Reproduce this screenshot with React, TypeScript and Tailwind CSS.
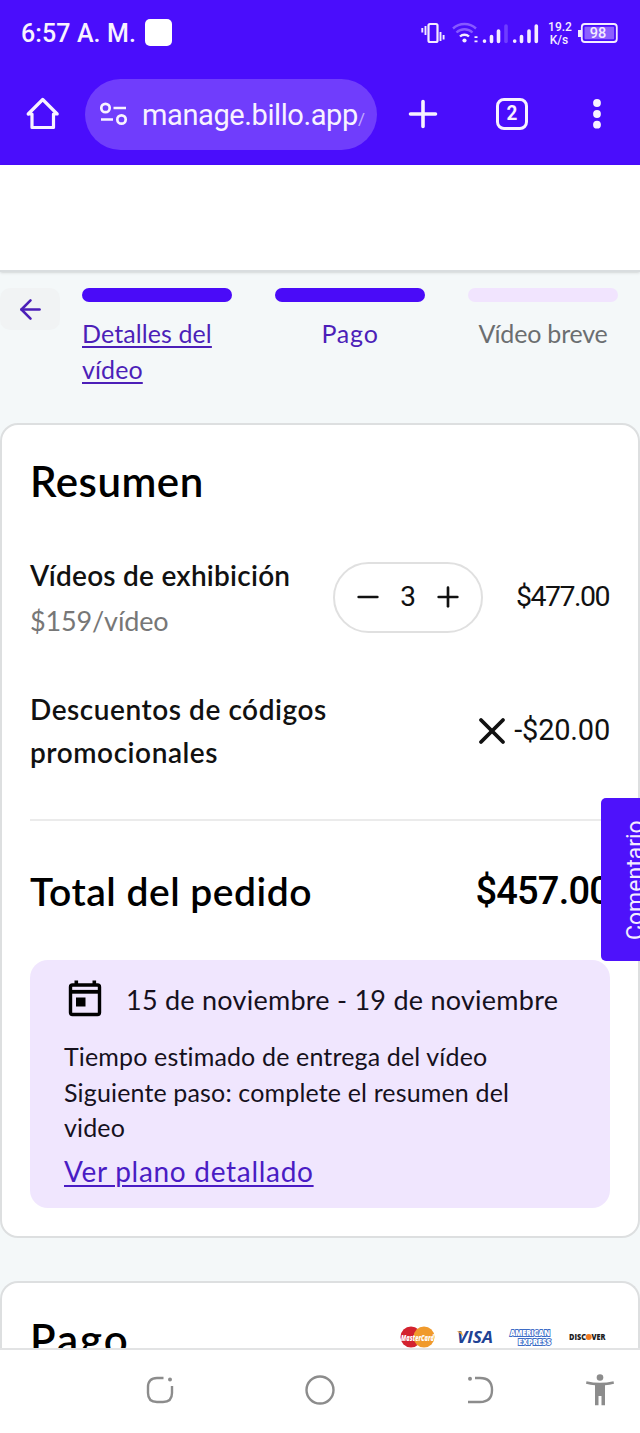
import { ArrowLeft, Minus, Plus, X } from "lucide-react";

const steps = [
  {
    label: "Detalles del vídeo",
    bar: "bg-[#4a0bf8]",
    text: "text-[#4c1fb8] tracking-[0.1px] underline underline-offset-[3px] decoration-2",
  },
  { label: "Pago", bar: "bg-[#4a0bf8]", text: "text-[#4c1fb8] tracking-[0.8px] text-center" },
  { label: "Vídeo breve", bar: "bg-[#f1e4fe]", text: "text-[#6b6e70] tracking-[-0.2px] text-center whitespace-nowrap" },
];

function StatusIcons() {
  return (
    <svg width="200" height="32" viewBox="0 0 200 32" fill="none" stroke="#f4ecff">
      {/* vibrate */}
      <rect x="8.5" y="7" width="9" height="18" rx="1.5" strokeWidth="2.2" />
      <path d="M5.5 9v9M2.3 11v4.5M20.5 15v9M23.6 18v4.5" strokeWidth="1.9" />
      {/* wifi */}
      <g strokeWidth="2.4">
        <path d="M33 11.5a17 17 0 0 1 23 0M36.5 15.5a11.5 11.5 0 0 1 16 0" stroke="#8759ff" />
        <path d="M40 19.5a6.5 6.5 0 0 1 9 0" />
      </g>
      <circle cx="44.5" cy="23.5" r="2.1" fill="#f4ecff" stroke="none" />
      <path d="M54.5 20.2h3M54.5 24.4h3" strokeWidth="1.8" />
      {/* signal */}
      <g strokeWidth="3.6" strokeLinecap="round">
        <path d="M64.5 24v.2M71.5 19.5v5M78.5 14v10.5" />
        <path d="M86 9v15.5" stroke="#6f3dff" />
        <path d="M94.7 24v.2M101.5 19.5v5M109 14v10.5M116.3 9v15.5" />
      </g>
      <g fontSize="12" fontFamily="Roboto" fontWeight="500" fill="#f4ecff" stroke="none" textAnchor="middle">
        <text x="140" y="13.5">19.2</text>
        <text x="139" y="26.5">K/s</text>
      </g>
      {/* battery */}
      <path d="M159.5 13v7" strokeWidth="3" />
      <rect x="161.8" y="7" width="35" height="18" rx="3" strokeWidth="1.8" />
      <rect x="164.5" y="9.7" width="29.6" height="12.6" rx="1" fill="#8c5fff" stroke="none" />
      <text x="178" y="21.3" textAnchor="middle" fontSize="14.5" fontFamily="Roboto" fontWeight="500" fill="#f4ecff" stroke="none">
        98
      </text>
    </svg>
  );
}

function BrowserHeader() {
  return (
    <header className="h-[165px] bg-[#4a0dfc] font-[Roboto,sans-serif] text-[#f8f2ff]">
      <div className="flex h-[66px] items-center pl-[21px] pr-[20px]">
        <span className="w-[124px] whitespace-nowrap pt-[2px] text-[25px] font-medium tracking-[0.1px]">6:57 A. M.</span>
        <span className="mb-[2px] size-[27px] rounded-[5px] bg-white" />
        <span className="ml-auto">
          <StatusIcons />
        </span>
      </div>
      <div className="flex h-[96px] items-center pl-[25px]">
        <svg width="36" height="36" viewBox="0 0 36 36" fill="none" stroke="currentColor" strokeWidth="3.2" strokeLinejoin="round" strokeLinecap="round">
          <path d="M7 18v13.5h21.5V18M3.2 18 17.7 3.5 32.2 18H29M3.2 18H7" />
        </svg>
        <div className="ml-[24px] flex h-[71px] w-[292px] items-center rounded-full bg-[#703dfc] pl-[15px]">
          <svg width="28" height="26" viewBox="0 0 28 26" fill="none" stroke="currentColor" strokeWidth="2.7">
            <circle cx="5.5" cy="7" r="4.2" />
            <circle cx="21.5" cy="18.5" r="4.2" />
            <path d="M13.5 7H26M1 18.5h12" />
          </svg>
          <span className="ml-[14px] flex items-baseline whitespace-nowrap pt-[3px] text-[29px] tracking-[-0.4px]">
            manage.billo.app
            <span className="text-[17px] opacity-60">/</span>
          </span>
        </div>
        <svg className="ml-[31px]" width="30" height="30" viewBox="0 0 30 30" stroke="currentColor" strokeWidth="3.6" strokeLinecap="round">
          <path d="M15 2.5v25M2.5 15h25" />
        </svg>
        <div className="ml-[58px] flex size-[32px] items-center justify-center rounded-[8px] border-[3px] border-current text-[21px] font-bold">
          <span className="scale-x-90">2</span>
        </div>
        <svg className="ml-[64px]" width="10" height="32" viewBox="0 0 10 32" fill="currentColor">
          <circle cx="5" cy="5" r="3.9" />
          <circle cx="5" cy="16" r="3.9" />
          <circle cx="5" cy="26.7" r="3.9" />
        </svg>
      </div>
    </header>
  );
}

function Stepper() {
  return (
    <div className="flex h-[151px] items-start pt-[16px]">
      <button className="flex h-[42px] w-[60px] items-center justify-center rounded-[10px] bg-[#f1f3f4] text-[#4c1fb8]">
        <ArrowLeft size={31} strokeWidth={2} />
      </button>
      <div className="ml-[22px] flex gap-[43px]">
        {steps.map((step) => (
          <div key={step.label} className="w-[150px]">
            <div className={`h-[14px] rounded-full ${step.bar}`} />
            <p className={`mt-[13px] text-[25px] leading-[36px] ${step.text}`}>{step.label}</p>
          </div>
        ))}
      </div>
    </div>
  );
}

function DeliveryBox() {
  return (
    <div className="mt-[41px] h-[248px] rounded-[18px] bg-[#f0e6fe] pl-[34px] pt-[17px] text-[#16111d]">
      <div className="flex h-[44px] items-center">
        <svg width="42" height="42" viewBox="0 0 42 42" fill="none" stroke="#000">
          <rect x="6.5" y="7" width="29" height="29.5" rx="2" strokeWidth="3.4" />
          <path d="M6 13.8h30" strokeWidth="3.8" />
          <path d="M12.3 2.5v5M30.3 2.5v5" strokeWidth="3.6" />
          <rect x="12" y="19.5" width="9.5" height="9" fill="#000" stroke="none" />
        </svg>
        <span className="ml-[20px] whitespace-nowrap pt-[2px] text-[27px] tracking-[0.25px]">15 de noviembre - 19 de noviembre</span>
      </div>
      <p className="mt-[18px] w-[480px] text-[25px] leading-[35.5px] tracking-[0.15px]">
        Tiempo estimado de entrega del vídeo
        <br />
        Siguiente paso: complete el resumen del video
      </p>
      <a className="mt-[5px] block text-[28px] leading-[40px] tracking-[0.7px] text-[#4a1cc4] underline decoration-2 underline-offset-[3px]">
        Ver plano detallado
      </a>
    </div>
  );
}

function SummaryCard() {
  return (
    <section className="h-[815px] rounded-[18px] border-2 border-[#dddfe0] bg-white px-[28px] text-[#111]">
      <h2 className="mt-[29px] text-[42px] font-semibold leading-[54px] tracking-[0.5px] text-black">Resumen</h2>
      <div className="mt-[44px] flex h-[90px] items-center">
        <div className="w-[303px] whitespace-nowrap pt-[2px]">
          <p className="text-[28px] font-semibold leading-[46px] tracking-[0.25px]">Vídeos de exhibición</p>
          <p className="text-[27px] leading-[46px] tracking-[-0.15px] text-[#777]">$159/vídeo</p>
        </div>
        <div className="flex h-[71px] w-[150px] items-center justify-center gap-[16px] rounded-full border-2 border-[#e0e0e0] font-[Roboto,sans-serif] text-[28px]">
          <Minus size={32} strokeWidth={2} />
          <span>3</span>
          <Plus size={32} strokeWidth={2} />
        </div>
        <span className="ml-auto pr-[1px] pt-[1px] font-[Roboto,sans-serif] text-[28.5px] tracking-[-1.5px]">$477.00</span>
      </div>
      <div className="mt-[46px] flex h-[86px] items-center justify-between">
        <p className="w-[320px] text-[28px] font-semibold leading-[43px] tracking-[0.55px]">
          Descuentos de códigos promocionales
        </p>
        <div className="flex items-center font-[Roboto,sans-serif] text-[29px] tracking-[-0.2px]">
          <X size={44} strokeWidth={2.1} />
          -$20.00
        </div>
      </div>
      <div className="mt-[45px] h-[2px] bg-[#ebebeb]" />
      <div className="mt-[42px] flex h-[56px] items-center justify-between text-[39px] font-semibold text-black">
        <span className="tracking-[0.5px]">Total del pedido</span>
        <span className="font-[Roboto,sans-serif] text-[38px] font-medium tracking-[-0.8px]">$457.00</span>
      </div>
      <DeliveryBox />
    </section>
  );
}

function CardLogos() {
  return (
    <svg width="210" height="24" viewBox="0 0 210 24" fontFamily="Open Sans, sans-serif">
      <circle cx="12" cy="12" r="10.5" fill="#d3222f" />
      <circle cx="25" cy="12" r="10.5" fill="#f09a2c" />
      <text x="18.5" y="15.5" textAnchor="middle" fontSize="8.5" fontWeight="800" fontStyle="italic" fill="#fff" textLength="33" lengthAdjust="spacingAndGlyphs">
        MasterCard
      </text>
      <text x="58" y="18" fontSize="16" fontWeight="700" fontStyle="italic" fill="#1f4294" textLength="36" lengthAdjust="spacingAndGlyphs">
        VISA
      </text>
      <path d="M57.5 6.5h5l2 5.5c-2-3-4-4.5-7-5.5z" fill="#eba334" />
      <g fontSize="8.5" fontWeight="800" fill="#fff" stroke="#3d6cc6" strokeWidth="1.8" paintOrder="stroke">
        <text x="111" y="10.5" textLength="40" lengthAdjust="spacingAndGlyphs">AMERICAN</text>
        <text x="119" y="20" textLength="33" lengthAdjust="spacingAndGlyphs">EXPRESS</text>
      </g>
      <g fontSize="8" fontWeight="800" fill="#1c1c1c">
        <text x="170" y="15" textLength="17" lengthAdjust="spacingAndGlyphs">DISC</text>
        <text x="192.5" y="15" textLength="14" lengthAdjust="spacingAndGlyphs">VER</text>
      </g>
      <circle cx="189.7" cy="12" r="3" fill="#ef7a22" />
    </svg>
  );
}

function PaymentCard() {
  return (
    <section className="mt-[43px] h-[67px] overflow-hidden rounded-t-[18px] border-2 border-b-0 border-[#dddfe0] bg-white pl-[28px] pr-[29px]">
      <div className="mt-[28px] flex h-[54px] items-start justify-between">
        <h2 className="text-[42px] font-semibold leading-[56px] tracking-[2px] text-black">Pago</h2>
        <div className="mt-[14px]">
          <CardLogos />
        </div>
      </div>
    </section>
  );
}

function NavBar() {
  return (
    <nav className="flex h-[85px] items-center border-t-2 border-[#e2e3e4] bg-white pb-[3px] pl-[145px] text-[#8c8c8c]">
      <svg width="30" height="30" viewBox="0 0 30 30" fill="none" stroke="currentColor" strokeWidth="2.4">
        <path d="M18.5 3H12Q3 3 3 12v6q0 9 9 9h6q9 0 9-9v-7" />
        <circle cx="25" cy="4.5" r="2" fill="currentColor" stroke="none" />
      </svg>
      <svg className="ml-[129px]" width="32" height="32" viewBox="0 0 32 32" fill="none" stroke="currentColor" strokeWidth="2.4">
        <circle cx="16" cy="16" r="13.5" />
      </svg>
      <svg className="ml-[129px]" width="30" height="30" viewBox="0 0 30 30" fill="none" stroke="currentColor" strokeWidth="2.4">
        <path d="M10 3h5Q27 3 27 15T15 27H3" />
        <circle cx="5" cy="3.7" r="2" fill="currentColor" stroke="none" />
      </svg>
      <svg className="ml-[90px]" width="30" height="34" viewBox="0 0 30 34" fill="currentColor">
        <circle cx="15" cy="4.5" r="3.3" />
        <path d="M1.5 8.2q13.5 3 27 0l.5 2.6q-4.5 1.2-9 1.5v20h-3.500V23h-3v9.300H10v-20q-4.500-.3-9-1.500z" />
      </svg>
    </nav>
  );
}

export default function App() {
  return (
    <div className="relative h-[1433px] w-[640px] overflow-hidden bg-[#f4f8f9] font-[Lato,sans-serif]">
      <BrowserHeader />
      <div className="h-[107px] border-b-2 border-[#d9dddf] bg-white shadow-sm" />
      <Stepper />
      <SummaryCard />
      <PaymentCard />
      <NavBar />
      {/* feedback tab pinned to the right edge */}
      <div className="absolute right-0 top-[798px] h-[163px] w-[39px] overflow-hidden rounded-l-[5px] bg-[#4e12fb]">
        <span className="absolute left-[21px] top-[20px] h-[122px] rotate-180 whitespace-nowrap font-[Roboto,sans-serif] text-[23px] leading-[27px] text-[#f4ecff] [writing-mode:vertical-rl]">
          Comentario
        </span>
      </div>
    </div>
  );
}
